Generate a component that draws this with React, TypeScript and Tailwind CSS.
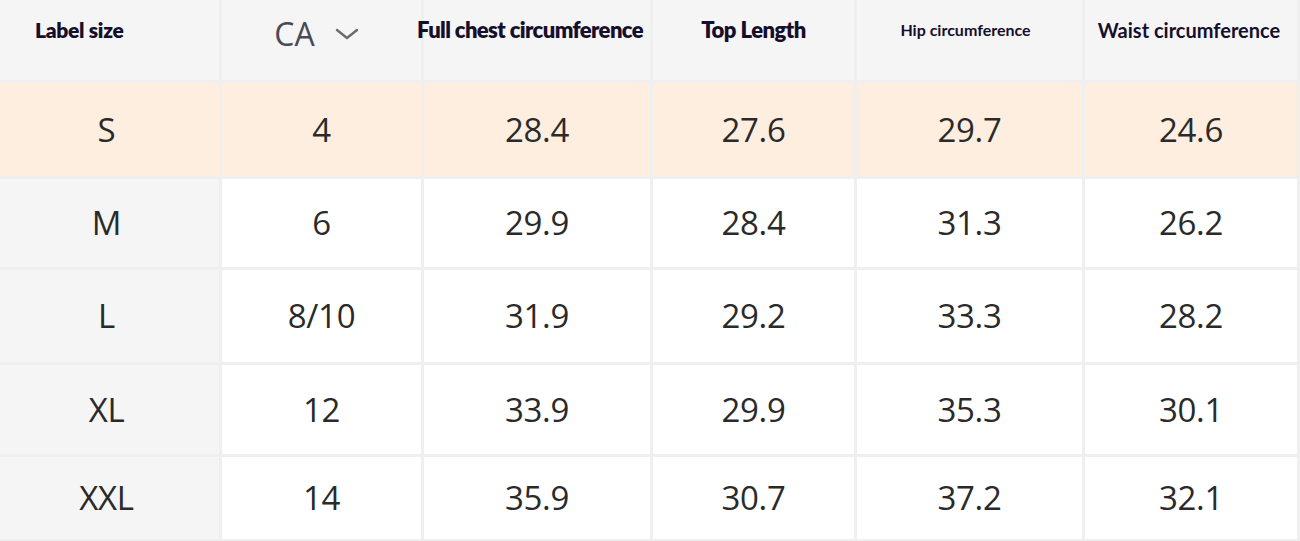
import React from "react";

const rows = [
  { size: "S", ca: "4", chest: "28.4", top: "27.6", hip: "29.7", waist: "24.6", h: "h-[96px]", hl: true },
  { size: "M", ca: "6", chest: "29.9", top: "28.4", hip: "31.3", waist: "26.2", h: "h-[91px]" },
  { size: "L", ca: "8/10", chest: "31.9", top: "29.2", hip: "33.3", waist: "28.2", h: "h-[95px]" },
  { size: "XL", ca: "12", chest: "33.9", top: "29.9", hip: "35.3", waist: "30.1", h: "h-[92px]" },
  { size: "XXL", ca: "14", chest: "35.9", top: "30.7", hip: "37.2", waist: "32.1", h: "h-[85px]" },
];

const cell = "border-r-[3px] border-b-[3px] border-[#efefef] flex items-center justify-center";
const head = "border-r-[3px] border-b-[3px] border-[#efefef] bg-[#f5f5f5] h-[84px] flex justify-center font-['Lato',sans-serif] text-[#160f2b] whitespace-nowrap";

export default function App() {
  return (
    <div className="w-[1300px] h-[541px] overflow-hidden bg-white">
      <div className="grid grid-cols-[222px_202px_229px_204px_228px_1fr] -mt-[1px]">
        <div className={`${head} justify-start pl-[35px] pt-[15px] text-[21px] font-extrabold tracking-[-0.3px]`}>Label size</div>
        <div className={`${head} items-start pt-[15px] gap-[20px] pr-[10px]`}>
          <span className="font-['Open_Sans',sans-serif] text-[32px] leading-[40px] text-[#4a4a55]">CA</span>
          <svg width="24" height="40" viewBox="0 0 24 40" className="text-[#6b6b6b]">
            <path d="M2 16 L12 24 L22 16" fill="none" stroke="currentColor" strokeWidth="2.4" strokeLinecap="round" strokeLinejoin="round" />
          </svg>
        </div>
        <div className={`${head} pt-[14px] text-[22px] font-extrabold tracking-[-0.6px]`}>
          <span className="-ml-[14px]">Full chest circumference</span>
        </div>
        <div className={`${head} pt-[14px] text-[22px] font-extrabold tracking-[-0.5px] text-[#1f0c0a]`}>Top Length</div>
        <div className={`${head} text-[16px] font-bold pt-[19px] text-[#1e1b26] pr-[8px]`}>Hip circumference</div>
        <div className={`${head} text-[20px] font-bold pt-[16px] border-r-0 pr-[4px]`}>Waist circumference</div>

        {rows.map((r) => {
          const bg = r.hl ? "bg-[#fdeee0]" : "bg-white";
          const txt = "font-['Open_Sans',sans-serif] text-[33px] font-medium text-[#2a2a2a] tracking-[-0.3px]";
          return (
            <React.Fragment key={r.size}>
              <div className={`${cell} ${r.h} ${r.hl ? "bg-[#fdeee0]" : "bg-[#f5f5f5]"} ${txt} pr-[6px]`}>{r.size}</div>
              <div className={`${cell} ${r.h} ${bg} ${txt}`}>{r.ca}</div>
              <div className={`${cell} ${r.h} ${bg} ${txt}`}>{r.chest}</div>
              <div className={`${cell} ${r.h} ${bg} ${txt}`}>{r.top}</div>
              <div className={`${cell} ${r.h} ${bg} ${txt}`}>{r.hip}</div>
              <div className={`${cell} ${r.h} ${bg} ${txt} border-r-0`}>{r.waist}</div>
            </React.Fragment>
          );
        })}
      </div>
    </div>
  );
}
